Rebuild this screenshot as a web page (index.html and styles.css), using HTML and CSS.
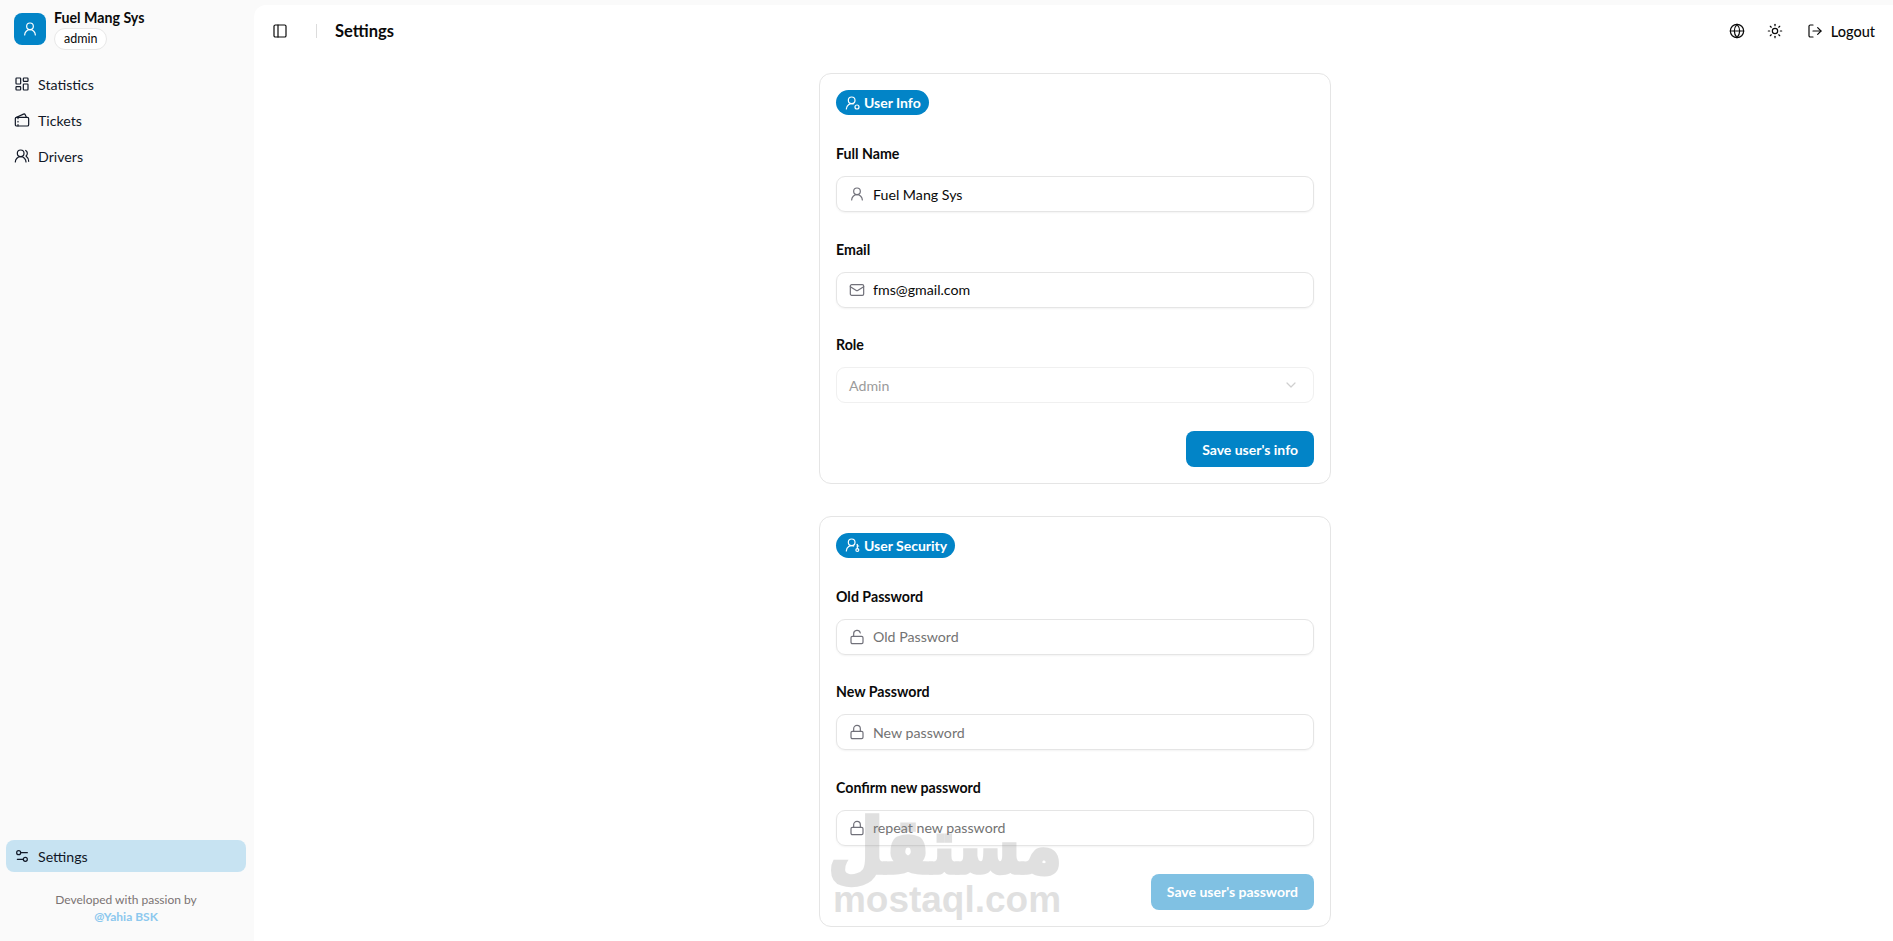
FILE: index.html
```html
<!DOCTYPE html>
<html lang="en">
<head>
<meta charset="utf-8">
<title>Settings</title>
<link rel="stylesheet" href="styles.css">
</head>
<body>
<svg class="sprite" aria-hidden="true">
  <symbol id="i-user" viewBox="0 0 24 24"><circle cx="12" cy="8" r="5"/><path d="M20 21a8 8 0 0 0-16 0"/></symbol>
  <symbol id="i-dash" viewBox="0 0 24 24"><rect width="7" height="9" x="3" y="3" rx="1"/><rect width="7" height="5" x="14" y="3" rx="1"/><rect width="7" height="9" x="14" y="12" rx="1"/><rect width="7" height="5" x="3" y="16" rx="1"/></symbol>
  <symbol id="i-tickets" viewBox="0 0 24 24"><path d="m3.173 8.18 11-5a2 2 0 0 1 2.647.993L18.56 8"/><path d="M6 10V8"/><path d="M6 14v1"/><path d="M6 19v2"/><rect x="2" y="8" width="20" height="13" rx="2"/></symbol>
  <symbol id="i-users" viewBox="0 0 24 24"><path d="M18 21a8 8 0 0 0-16 0"/><circle cx="10" cy="8" r="5"/><path d="M22 20c0-3.37-2-6.5-4-8a5 5 0 0 0-.45-8.3"/></symbol>
  <symbol id="i-sliders" viewBox="0 0 24 24"><path d="M20 7h-9"/><path d="M14 17H5"/><circle cx="17" cy="17" r="3"/><circle cx="7" cy="7" r="3"/></symbol>
  <symbol id="i-panel" viewBox="0 0 24 24"><rect width="18" height="18" x="3" y="3" rx="2"/><path d="M9 3v18"/></symbol>
  <symbol id="i-globe" viewBox="0 0 24 24"><circle cx="12" cy="12" r="10"/><path d="M12 2a14.5 14.5 0 0 0 0 20 14.5 14.5 0 0 0 0-20"/><path d="M2 12h20"/></symbol>
  <symbol id="i-sun" viewBox="0 0 24 24"><circle cx="12" cy="12" r="4"/><path d="M12 2v2"/><path d="M12 20v2"/><path d="m4.93 4.93 1.41 1.41"/><path d="m17.66 17.66 1.41 1.41"/><path d="M2 12h2"/><path d="M20 12h2"/><path d="m6.34 17.66-1.41 1.41"/><path d="m19.07 4.93-1.41 1.41"/></symbol>
  <symbol id="i-logout" viewBox="0 0 24 24"><path d="M9 21H5a2 2 0 0 1-2-2V5a2 2 0 0 1 2-2h4"/><path d="m16 17 5-5-5-5"/><path d="M21 12H9"/></symbol>
  <symbol id="i-mail" viewBox="0 0 24 24"><rect width="20" height="16" x="2" y="4" rx="2"/><path d="m22 7-8.97 5.7a1.94 1.94 0 0 1-2.06 0L2 7"/></symbol>
  <symbol id="i-lock" viewBox="0 0 24 24"><rect width="18" height="11" x="3" y="11" rx="2"/><path d="M7 11V7a5 5 0 0 1 10 0v4"/></symbol>
  <symbol id="i-unlock" viewBox="0 0 24 24"><rect width="18" height="11" x="3" y="11" rx="2"/><path d="M7 11V7a5 5 0 0 1 9.9-1"/></symbol>
  <symbol id="i-chevron" viewBox="0 0 24 24"><path d="m6 9 6 6 6-6"/></symbol>
  <symbol id="i-user-cog" viewBox="0 0 24 24"><path d="M2 21a8 8 0 0 1 10.434-7.62"/><circle cx="10" cy="8" r="5"/><circle cx="18" cy="18" r="3"/></symbol>
  <symbol id="i-user-key" viewBox="0 0 24 24"><path d="M2 21a8 8 0 0 1 11-7.4"/><circle cx="10" cy="8" r="5"/><circle cx="18.5" cy="19.5" r="2.2"/><path d="M18.5 17.3V11"/><path d="M18.5 13.5h2"/></symbol>
</svg>

<div class="app">
  <aside class="sidebar">
    <div class="brand">
      <div class="avatar"><svg class="icon"><use href="#i-user"/></svg></div>
      <div class="brand-text">
        <div class="brand-name">Fuel Mang Sys</div>
        <span class="role-chip">admin</span>
      </div>
    </div>
    <nav class="nav">
      <a class="nav-item"><svg class="icon"><use href="#i-dash"/></svg>Statistics</a>
      <a class="nav-item"><svg class="icon"><use href="#i-tickets"/></svg>Tickets</a>
      <a class="nav-item"><svg class="icon"><use href="#i-users"/></svg>Drivers</a>
    </nav>
    <div class="sidebar-bottom">
      <a class="nav-item nav-item-active"><svg class="icon"><use href="#i-sliders"/></svg>Settings</a>
      <p class="credit">Developed with passion by<br><strong class="credit-link">@Yahia BSK</strong></p>
    </div>
  </aside>

  <main class="inset">
    <header class="topbar">
      <div class="topbar-left">
        <svg class="icon"><use href="#i-panel"/></svg>
        <span class="divider"></span>
        <h1 class="page-title">Settings</h1>
      </div>
      <div class="topbar-right">
        <svg class="icon"><use href="#i-globe"/></svg>
        <svg class="icon"><use href="#i-sun"/></svg>
        <span class="logout"><svg class="icon"><use href="#i-logout"/></svg>Logout</span>
      </div>
    </header>

    <div class="content">
      <section class="card">
        <span class="pill"><svg class="icon"><use href="#i-user-cog"/></svg>User Info</span>
        <div class="field">
          <label class="label">Full Name</label>
          <div class="input-wrap"><svg class="icon field-icon"><use href="#i-user"/></svg><input class="input" value="Fuel Mang Sys"></div>
        </div>
        <div class="field">
          <label class="label">Email</label>
          <div class="input-wrap"><svg class="icon field-icon"><use href="#i-mail"/></svg><input class="input" value="fms@gmail.com"></div>
        </div>
        <div class="field">
          <label class="label">Role</label>
          <div class="select"><span>Admin</span><svg class="icon"><use href="#i-chevron"/></svg></div>
        </div>
        <div class="actions"><button class="btn">Save user's info</button></div>
      </section>

      <section class="card">
        <span class="pill"><svg class="icon"><use href="#i-user-key"/></svg>User Security</span>
        <div class="field">
          <label class="label">Old Password</label>
          <div class="input-wrap"><svg class="icon field-icon"><use href="#i-unlock"/></svg><input class="input" placeholder="Old Password"></div>
        </div>
        <div class="field">
          <label class="label">New Password</label>
          <div class="input-wrap"><svg class="icon field-icon"><use href="#i-lock"/></svg><input class="input" placeholder="New password"></div>
        </div>
        <div class="field">
          <label class="label">Confirm new password</label>
          <div class="input-wrap"><svg class="icon field-icon"><use href="#i-lock"/></svg><input class="input" placeholder="repeat new password"></div>
        </div>
        <div class="actions"><button class="btn btn-disabled">Save user's password</button></div>
      </section>
    </div>
  </main>
</div>

<div class="watermark" aria-hidden="true">
  <div class="wm-ar" lang="ar" dir="rtl">مستقل</div>
  <div class="wm-en">mostaql.com</div>
</div>
</body>
</html>
```

FILE: styles.css
```css
* { box-sizing: border-box; }
html, body { height: 100%; margin: 0; }
body {
  overflow: hidden;
  background: #fafafa;
  color: #0a0a0a;
  font-family: "Lato", "Open Sans", sans-serif;
  font-size: 14.2px;
}
.sprite { display: none; }
.icon {
  width: 16px;
  height: 16px;
  flex: none;
  fill: none;
  stroke: currentColor;
  stroke-width: 1.8;
  stroke-linecap: round;
  stroke-linejoin: round;
}

.app { display: flex; height: 941px; }

/* Sidebar */
.sidebar {
  width: 254px;
  flex: none;
  display: flex;
  flex-direction: column;
  padding: 13px 8px 0 6px;
}
.brand { display: flex; gap: 8px; padding-left: 8px; height: 49px; }
.avatar {
  width: 32px;
  height: 32px;
  border-radius: 8px;
  background: #0284c7;
  color: #fff;
  display: flex;
  align-items: center;
  justify-content: center;
}
.brand-text { margin-top: -3px; }
.brand-name { font-weight: 700; font-size: 14.2px; line-height: 14px; margin-top: 1px; }
.role-chip {
  display: inline-block;
  margin-top: 3px;
  padding: 0 9px;
  height: 22px;
  line-height: 20px;
  border: 1px solid #e8e8e8;
  border-radius: 11px;
  background: #fff;
  font-size: 12.5px;
}
.nav { display: flex; flex-direction: column; gap: 4px; margin-top: 6px; }
.nav-item {
  display: flex;
  align-items: center;
  gap: 8px;
  height: 32px;
  padding: 0 8px;
  border-radius: 8px;
  font-size: 14.2px;
  color: #111827;
}
.nav-item-active { background: #c7e3f2; }
.sidebar-bottom { margin-top: auto; padding-bottom: 16px; }
.credit {
  margin: 20px 0 0;
  text-align: center;
  font-size: 12px;
  line-height: 16.5px;
  color: #7a7373;
}
.credit-link { color: #8cc8ee; }

/* Main */
.inset {
  flex: 1;
  margin-top: 5px;
  padding-left: 3px;
  background: #fff;
  border-radius: 12px 0 0 0;
  min-width: 0;
}
.topbar {
  height: 52px;
  display: flex;
  align-items: center;
  justify-content: space-between;
  padding: 0 18px 0 15px;
}
.topbar-left, .topbar-right { display: flex; align-items: center; }
.divider { width: 1px; height: 14px; background: #dcdcdc; margin: 0 18px 0 28px; }
.page-title { margin: 0; font-size: 16.5px; font-weight: 700; }
.topbar-right { gap: 22px; }
.logout { display: flex; align-items: center; gap: 8px; font-size: 14.5px; font-weight: 500; margin-left: 2px; }

.content {
  width: 512px;
  margin: 16px auto 0;
  display: flex;
  flex-direction: column;
  gap: 31.8px;
}
.card {
  border: 1px solid #e5e5e5;
  border-radius: 12px;
  background: #fff;
  padding: 16px;
}
.pill {
  display: flex;
  width: fit-content;
  align-items: center;
  gap: 3px;
  height: 25px;
  padding: 0 8px 0 9px;
  border-radius: 13px;
  background: #0284c7;
  color: #fff;
  font-size: 14px;
  font-weight: 700;
}
.field { margin-top: 28.5px; }
.pill + .field { margin-top: 30px; }
.label { display: block; font-size: 14.2px; font-weight: 700; line-height: 18px; margin-bottom: 13px; }
.input-wrap { position: relative; }
.field-icon {
  position: absolute;
  left: 13px;
  top: 10px;
  color: #71717a;
}
.input {
  display: block;
  width: 100%;
  height: 36px;
  padding: 0 12px 0 36px;
  border: 1px solid #e5e5e5;
  border-radius: 9px;
  background: transparent;
  box-shadow: 0 1px 2px rgba(0,0,0,.05);
  font: inherit;
  color: #0a0a0a;
  outline: none;
}
.input::placeholder { color: #737373; opacity: 1; }
.select {
  height: 36px;
  display: flex;
  align-items: center;
  justify-content: space-between;
  padding: 0 14px 0 12px;
  border: 1px solid #f0f0f0;
  border-radius: 9px;
  color: #9b9b9b;
}
.select .icon { color: #cfcfcf; }
.actions { display: flex; justify-content: flex-end; margin-top: 28px; }
.btn {
  height: 36px;
  padding: 0 16px;
  border: 0;
  border-radius: 8px;
  background: #0284c7;
  color: #fff;
  font: inherit;
  font-size: 14px;
  font-weight: 700;
}
.btn-disabled { background: #80c1e3; }

/* Mostaql watermark over the page */
.watermark {
  position: absolute;
  left: 832px;
  top: 817px;
  width: 230px;
  color: #888;
  opacity: .25;
  text-align: center;
  pointer-events: none;
}
.wm-ar {
  font-family: "DejaVu Sans", sans-serif;
  font-weight: 700;
  font-size: 64px;
  line-height: 66px;
  -webkit-text-stroke: 3px #888;
  transform: scaleY(1.2);
  transform-origin: 50% 75%;
}
.wm-en { font-family: "Liberation Sans", sans-serif; font-weight: 700; font-size: 37px; line-height: 34px; }
```
